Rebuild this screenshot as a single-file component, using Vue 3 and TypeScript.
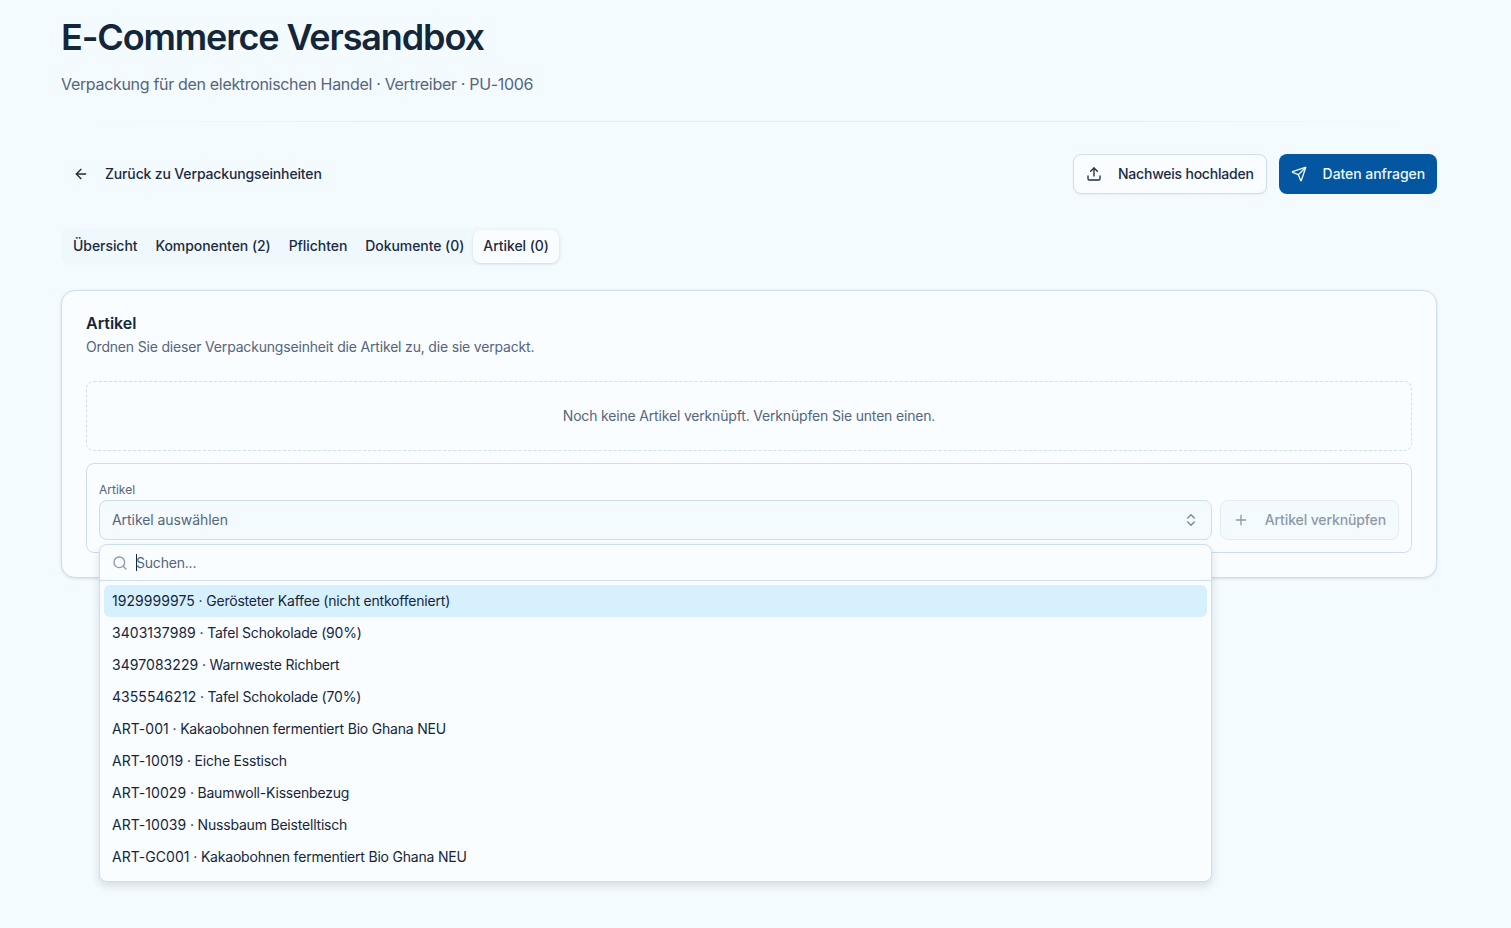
<script setup lang="ts">
const tabs = [
  { label: 'Übersicht', active: false },
  { label: 'Komponenten (2)', active: false },
  { label: 'Pflichten', active: false },
  { label: 'Dokumente (0)', active: false },
  { label: 'Artikel (0)', active: true },
];

const options = [
  { code: '1929999975', name: 'Gerösteter Kaffee (nicht entkoffeniert)' },
  { code: '3403137989', name: 'Tafel Schokolade (90%)' },
  { code: '3497083229', name: 'Warnweste Richbert' },
  { code: '4355546212', name: 'Tafel Schokolade (70%)' },
  { code: 'ART-001', name: 'Kakaobohnen fermentiert Bio Ghana NEU' },
  { code: 'ART-10019', name: 'Eiche Esstisch' },
  { code: 'ART-10029', name: 'Baumwoll-Kissenbezug' },
  { code: 'ART-10039', name: 'Nussbaum Beistelltisch' },
  { code: 'ART-GC001', name: 'Kakaobohnen fermentiert Bio Ghana NEU' },
];
</script>

<template>
  <div class="page">
    <header class="head">
      <h1>E-Commerce Versandbox</h1>
      <p>Verpackung für den elektronischen Handel · Vertreiber · PU-1006</p>
    </header>
    <div class="divider"></div>

    <div class="actions">
      <button class="btn ghost">
        <svg viewBox="0 0 24 24" class="icon"><path d="m12 19-7-7 7-7" /><path d="M19 12H5" /></svg>
        Zurück zu Verpackungseinheiten
      </button>
      <div class="actions-right">
        <button class="btn outline">
          <svg viewBox="0 0 24 24" class="icon"><path d="M12 3v12" /><path d="m17 8-5-5-5 5" /><path d="M21 15v4a2 2 0 0 1-2 2H5a2 2 0 0 1-2-2v-4" /></svg>
          Nachweis hochladen
        </button>
        <button class="btn primary">
          <svg viewBox="0 0 24 24" class="icon"><path d="M14.536 21.686a.5.5 0 0 0 .937-.024l6.5-19a.496.496 0 0 0-.635-.635l-19 6.5a.5.5 0 0 0-.024.937l7.93 3.18a2 2 0 0 1 1.112 1.11z" /><path d="m21.854 2.147-10.94 10.939" /></svg>
          Daten anfragen
        </button>
      </div>
    </div>

    <nav class="tabs">
      <span v-for="tab in tabs" :key="tab.label" class="tab" :class="{ active: tab.active }">{{ tab.label }}</span>
    </nav>

    <section class="card">
      <h2>Artikel</h2>
      <p class="desc">Ordnen Sie dieser Verpackungseinheit die Artikel zu, die sie verpackt.</p>

      <div class="empty">Noch keine Artikel verknüpft. Verknüpfen Sie unten einen.</div>

      <div class="link-box">
        <div class="field">
          <label>Artikel</label>
          <div class="select">
            <span>Artikel auswählen</span>
            <svg viewBox="0 0 24 24" class="chevrons"><path d="m7 15 5 5 5-5" /><path d="m7 9 5-5 5 5" /></svg>
          </div>

          <div class="dropdown">
            <div class="search">
              <svg viewBox="0 0 24 24" class="search-icon"><path d="m21 21-4.34-4.34" /><circle cx="11" cy="11" r="8" /></svg>
              <span class="caret"></span>
              <span class="placeholder">Suchen...</span>
            </div>
            <ul class="list">
              <li v-for="(opt, i) in options" :key="opt.code" :class="{ selected: i === 0 }">
                <span class="code">{{ opt.code }}</span> · {{ opt.name }}
              </li>
            </ul>
          </div>
        </div>
        <button class="btn disabled">
          <svg viewBox="0 0 24 24" class="icon"><path d="M5 12h14" /><path d="M12 5v14" /></svg>
          Artikel verknüpfen
        </button>
      </div>
    </section>
  </div>
</template>

<style>
html,
body {
  margin: 0;
  background: #f4fbff;
}
</style>

<style scoped>
.page {
  box-sizing: border-box;
  height: 928px;
  overflow: hidden;
  padding: 17px 74px 0 61px;
  font-family: Inter, "Liberation Sans", sans-serif;
  color: #16263a;
  background: #f4fbff;
}
.head h1 {
  margin: 0;
  font-size: 36px;
  line-height: 40px;
  font-weight: 600;
  letter-spacing: -1.14px;
  color: #142639;
}
.head p {
  margin: 15px 0 0;
  font-size: 16px;
  line-height: 24px;
  letter-spacing: -0.32px;
  color: #56657a;
}
.divider {
  height: 1px;
  margin-top: 25px;
  background: linear-gradient(90deg, transparent 2%, #e6edf6 22%, #e6edf6 78%, transparent 98%);
}
.actions {
  display: flex;
  justify-content: space-between;
  align-items: center;
  margin-top: 32px;
}
.actions-right {
  display: flex;
  gap: 12px;
}
.btn {
  display: inline-flex;
  align-items: center;
  gap: 16px;
  box-sizing: border-box;
  height: 40px;
  padding: 0 12px;
  border: none;
  border-radius: 8px;
  background: none;
  font: 500 14px/20px Inter, "Liberation Sans", sans-serif;
  letter-spacing: -0.15px;
  color: #1c2b3f;
}
.icon {
  width: 16px;
  height: 16px;
  flex: none;
  fill: none;
  stroke: currentColor;
  stroke-width: 2;
  stroke-linecap: round;
  stroke-linejoin: round;
}
.outline {
  border: 1px solid #cfdeec;
  background: #f9fdff;
  box-shadow: 0 1px 2px rgba(20, 40, 70, 0.06);
  letter-spacing: -0.22px;
}
.primary {
  background: #03569f;
  color: #eef8ff;
  letter-spacing: -0.07px;
}
.tabs {
  display: inline-flex;
  align-items: flex-start;
  box-sizing: border-box;
  height: 38px;
  margin-top: 33px;
  padding: 3px 3px 2px;
  border-radius: 10px;
  background: #eff8fd;
  vertical-align: top;
}
.tab {
  padding: 6px 9px 7px;
  font-size: 14px;
  line-height: 20px;
  font-weight: 500;
  letter-spacing: -0.06px;
  color: #1c2b3f;
  border-radius: 8px;
}
.active {
  padding: 6px 10px 7px;
  background: #f9fdff;
  box-shadow: 0 1px 3px rgba(20, 40, 70, 0.14);
}
.card {
  box-sizing: border-box;
  height: 288px;
  margin-top: 25px;
  padding: 24px;
  border: 1px solid #cfdeec;
  border-radius: 14px;
  background: #f9fdff;
  box-shadow: 0 1px 3px rgba(20, 40, 70, 0.12);
}
.card h2 {
  margin: 0;
  font-size: 16px;
  line-height: 16px;
  font-weight: 600;
  color: #142639;
}
.desc {
  margin: 6px 0 0;
  font-size: 14px;
  line-height: 20px;
  letter-spacing: -0.18px;
  color: #56657a;
}
.empty {
  display: flex;
  align-items: center;
  justify-content: center;
  box-sizing: border-box;
  height: 70px;
  margin-top: 24px;
  border: 1px dashed #cfdeec;
  border-radius: 8px;
  font-size: 14px;
  line-height: 20px;
  letter-spacing: -0.175px;
  color: #56657a;
}
.link-box {
  display: flex;
  align-items: flex-end;
  gap: 8px;
  box-sizing: border-box;
  height: 90px;
  margin-top: 12px;
  padding: 12px;
  border: 1px solid #cfdeec;
  border-radius: 8px;
}
.field {
  position: relative;
  flex: 1;
}
.field label {
  display: block;
  margin-bottom: 2px;
  font-size: 12px;
  line-height: 16px;
  color: #56657a;
}
.select {
  display: flex;
  align-items: center;
  justify-content: space-between;
  box-sizing: border-box;
  height: 40px;
  padding: 0 12px;
  border: 1px solid #cfdeec;
  border-radius: 8px;
  background: #f4fbff;
  font-size: 14px;
  line-height: 20px;
  letter-spacing: -0.06px;
  color: #56657a;
}
.chevrons {
  width: 16px;
  height: 16px;
  fill: none;
  stroke: #7a8698;
  stroke-width: 2;
  stroke-linecap: round;
  stroke-linejoin: round;
}
.disabled {
  border: 1px solid #e3ebf3;
  background: #f4fbff;
  color: #8e99a8;
  letter-spacing: -0.12px;
}
.dropdown {
  position: absolute;
  top: 62px;
  left: 0;
  right: 0;
  box-sizing: border-box;
  height: 338px;
  border: 1px solid #cfdeec;
  border-radius: 8px;
  background: #f9fdff;
  box-shadow: 0 4px 8px rgba(20, 40, 70, 0.14);
}
.search {
  display: flex;
  align-items: center;
  box-sizing: border-box;
  height: 36px;
  padding: 0 12px;
  border-bottom: 1px solid #cfdeec;
  font-size: 14px;
  line-height: 20px;
  letter-spacing: -0.2px;
  color: #56657a;
}
.search-icon {
  width: 16px;
  height: 16px;
  margin-right: 8px;
  fill: none;
  stroke: #8e99a8;
  stroke-width: 2;
  stroke-linecap: round;
  stroke-linejoin: round;
}
.caret {
  width: 1px;
  height: 17px;
  margin-right: -1px;
  background: #142639;
}
.list {
  margin: 0;
  padding: 4px;
  list-style: none;
}
.list li {
  height: 32px;
  padding: 0 8px;
  border-radius: 6px;
  font-size: 14px;
  line-height: 32px;
  letter-spacing: -0.2px;
  color: #16263a;
}
.code {
  letter-spacing: 0.05px;
}
.list .selected {
  background: #d6f0fe;
}
</style>
